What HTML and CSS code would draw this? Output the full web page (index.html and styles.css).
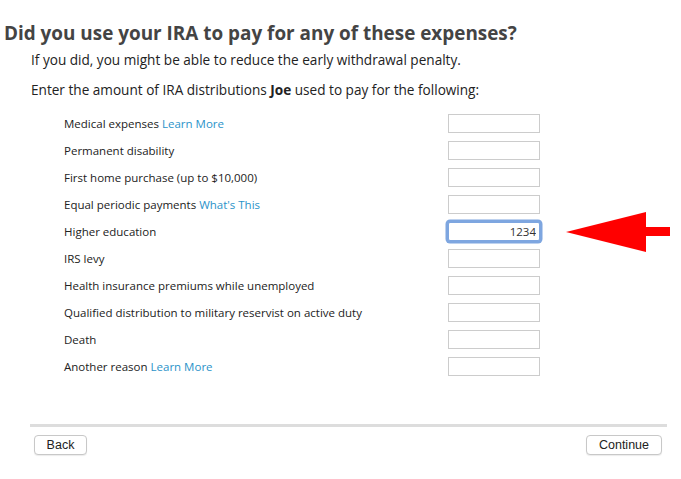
FILE: index.html
```html
<!DOCTYPE html>
<html>
<head>
<meta charset="utf-8">
<title>IRA distributions</title>
<link rel="stylesheet" href="styles.css">
</head>
<body>
<div class="page">
  <h1 class="title">Did you use your IRA to pay for any of these expenses?</h1>
  <p class="intro">If you did, you might be able to reduce the early withdrawal penalty.</p>
  <p class="intro second">Enter the amount of IRA distributions <b>Joe</b> used to pay for the following:</p>

  <div class="rows">
    <div class="row"><span class="label">Medical expenses <a class="link" href="#">Learn More</a></span><input class="amount" type="text"></div>
    <div class="row"><span class="label">Permanent disability</span><input class="amount" type="text"></div>
    <div class="row"><span class="label">First home purchase (up to $10,000)</span><input class="amount" type="text"></div>
    <div class="row"><span class="label">Equal periodic payments <a class="link" href="#">What's This</a></span><input class="amount" type="text"></div>
    <div class="row"><span class="label">Higher education</span><input class="amount focused" type="text" value="1234"></div>
    <div class="row"><span class="label">IRS levy</span><input class="amount" type="text"></div>
    <div class="row"><span class="label">Health insurance premiums while unemployed</span><input class="amount" type="text"></div>
    <div class="row"><span class="label">Qualified distribution to military reservist on active duty</span><input class="amount" type="text"></div>
    <div class="row"><span class="label">Death</span><input class="amount" type="text"></div>
    <div class="row"><span class="label">Another reason <a class="link" href="#">Learn More</a></span><input class="amount" type="text"></div>
  </div>

  <div class="divider"></div>
  <div class="buttons">
    <button class="btn back">Back</button>
    <button class="btn continue">Continue</button>
  </div>

  <svg class="arrow" width="104" height="40" viewBox="0 0 104 40">
    <polygon points="0,20 80,0 80,15 104,15 104,24 80,24 80,40" fill="#ff0000"/>
  </svg>
</div>
</body>
</html>
```
FILE: styles.css
```css
html, body {
  margin: 0;
  padding: 0;
  background: #ffffff;
}
.page {
  position: relative;
  width: 681px;
  height: 479px;
  font-family: "Open Sans", "DejaVu Sans", sans-serif;
  color: #222222;
}
.title {
  margin: 0;
  padding: 21px 0 0 4px;
  font-size: 18.9px;
  line-height: 24px;
  font-weight: bold;
  color: #444444;
}
.intro {
  margin: 6px 0 0 0;
  padding-left: 31px;
  font-size: 13.6px;
  line-height: 18px;
  color: #222222;
}
.intro.second {
  margin-top: 12px;
}
.intro b {
  font-weight: bold;
}
.rows {
  margin-top: 11px;
  display: flex;
  flex-direction: column;
}
.row {
  display: grid;
  grid-template-columns: 384px 92px;
  align-items: center;
  height: 27px;
  padding-left: 64px;
}
.label {
  font-size: 11.5px;
  line-height: 16px;
  color: #222222;
}
.link {
  color: #2b93c9;
  text-decoration: none;
}
.amount {
  box-sizing: border-box;
  width: 92px;
  height: 19px;
  margin: 0;
  padding: 0 4px 0 4px;
  border: 1px solid #cccccc;
  border-radius: 0;
  background: #ffffff;
  font-family: "Open Sans", "DejaVu Sans", sans-serif;
  font-size: 11.5px;
  color: #333333;
  text-align: right;
  outline: none;
}
.amount.focused {
  border: 1px solid #7ea6e0;
  border-radius: 2px;
  box-shadow: 0 0 0 2.5px #7ea6e0;
  padding-right: 3px;
}
.divider {
  margin: 44px 0 0 30px;
  width: 637px;
  height: 3px;
  background: #dddddd;
}
.buttons {
  display: flex;
  justify-content: space-between;
  margin: 8px 19px 0 34px;
}
.btn {
  box-sizing: border-box;
  height: 20px;
  padding: 0;
  border: 1px solid #c8c8c8;
  border-radius: 4px;
  background: #ffffff;
  box-shadow: 0 1px 1px rgba(0,0,0,0.08);
  font-family: "Liberation Sans", Arial, sans-serif;
  font-size: 12.5px;
  color: #222222;
}
.back {
  width: 53px;
}
.continue {
  width: 76px;
}
.arrow {
  position: absolute;
  left: 566px;
  top: 212px;
}
```
